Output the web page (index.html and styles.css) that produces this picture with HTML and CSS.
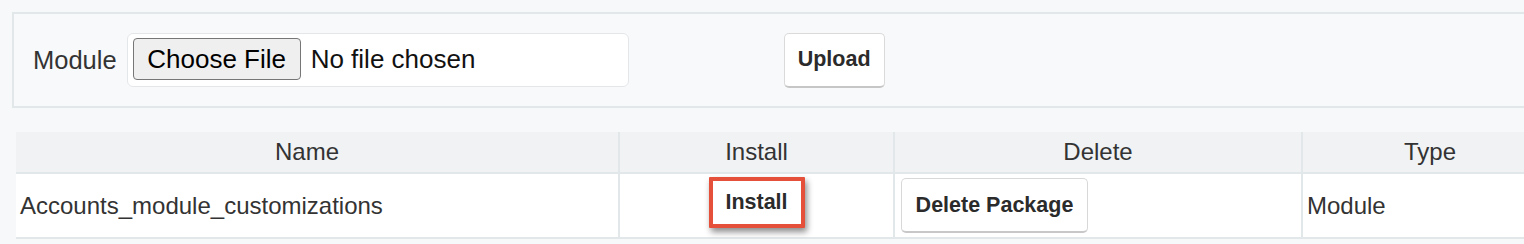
FILE: index.html
```html
<!DOCTYPE html>
<html lang="en">
<head>
  <meta charset="UTF-8" />
  <title>Module Loader</title>
  <link rel="stylesheet" href="styles.css">
</head>
<body>

<form class="upload-panel" onsubmit="return false;">
  <label class="upload-label" for="upgrade_zip">Module</label>
  <input type="file" id="upgrade_zip" name="upgrade_zip" class="file-input">
  <button type="submit" class="btn btn-upload">Upload</button>
</form>

<table class="packages">
  <colgroup>
    <col class="col-name">
    <col class="col-install">
    <col class="col-delete">
    <col class="col-type">
  </colgroup>
  <thead>
    <tr>
      <th class="th-name">Name</th>
      <th>Install</th>
      <th>Delete</th>
      <th>Type</th>
    </tr>
  </thead>
  <tbody>
    <tr>
      <td>Accounts_module_customizations</td>
      <td class="center"><button class="btn btn-install">Install</button></td>
      <td class="td-delete"><button class="btn btn-delete">Delete Package</button></td>
      <td>Module</td>
    </tr>
  </tbody>
</table>

</body>
</html>
```

FILE: styles.css
```css
html, body { margin: 0; overflow: hidden; }
body { background: #f7f8fa; font-family: "Liberation Sans", Arial, sans-serif; color: #333; font-size: 24px; }

.upload-panel { display: flex; align-items: center; box-sizing: border-box; width: 1560px; height: 96px; margin: 12px 0 0 12px; padding-left: 19px; background: #f8f9fa; border: 2px solid #e2e7e9; }
.upload-label { margin-right: 10px; font-size: 25.5px; }
.file-input { box-sizing: border-box; width: 502px; height: 54px; padding: 4px 5px; background: #fff; border: 1.5px solid #e4e7e9; border-radius: 6px; font: inherit; font-size: 26px; color: #111; }
.file-input::file-selector-button { height: 42px; width: 168px; margin-right: 10px; padding: 0; background: #efefef; border: 1.5px solid #767676; border-radius: 4px; font: inherit; color: #000; }

.btn { font-family: "Liberation Sans", Arial, sans-serif; font-weight: bold; font-size: 21.5px; color: #2b2b2b; background: #fff; cursor: pointer; }
.btn-upload { box-sizing: border-box; width: 101px; height: 55px; margin-left: 155px; border: 1px solid #dadada; border-bottom: 2px solid #c6c6c6; border-radius: 5px; }
.btn-install { box-sizing: border-box; width: 96px; height: 51px; margin-top: -6px; border: 4px solid #e5503b; border-radius: 1px; box-shadow: 2px 4px 6px rgba(0,0,0,0.45); }
.btn-delete { box-sizing: border-box; width: 187px; height: 55px; border: 1px solid #d8d8d8; border-bottom: 2px solid #c8c8c8; border-radius: 5px; }

.packages { table-layout: fixed; width: 1541px; margin: 24px 0 0 16px; border-collapse: separate; border-spacing: 0; }
.col-name { width: 604px; }
.col-install { width: 275px; }
.col-delete { width: 408px; }
.col-type { width: 254px; }
.packages th { box-sizing: border-box; height: 42px; padding: 0; background: #f0f2f4; font-weight: normal; text-align: center; border-right: 2px solid #e2e7e9; border-bottom: 2px solid #e2e7e9; }
.packages th.th-name { padding-right: 20px; }
.packages td { box-sizing: border-box; height: 65px; padding: 0 4px; background: #fff; border-right: 2px solid #e2e7e9; border-bottom: 2px solid #e2e7e9; }
.packages td.td-delete { padding-left: 6px; }
.packages th:last-child, .packages td:last-child { border-right: none; }
.packages td.center { text-align: center; }
```
